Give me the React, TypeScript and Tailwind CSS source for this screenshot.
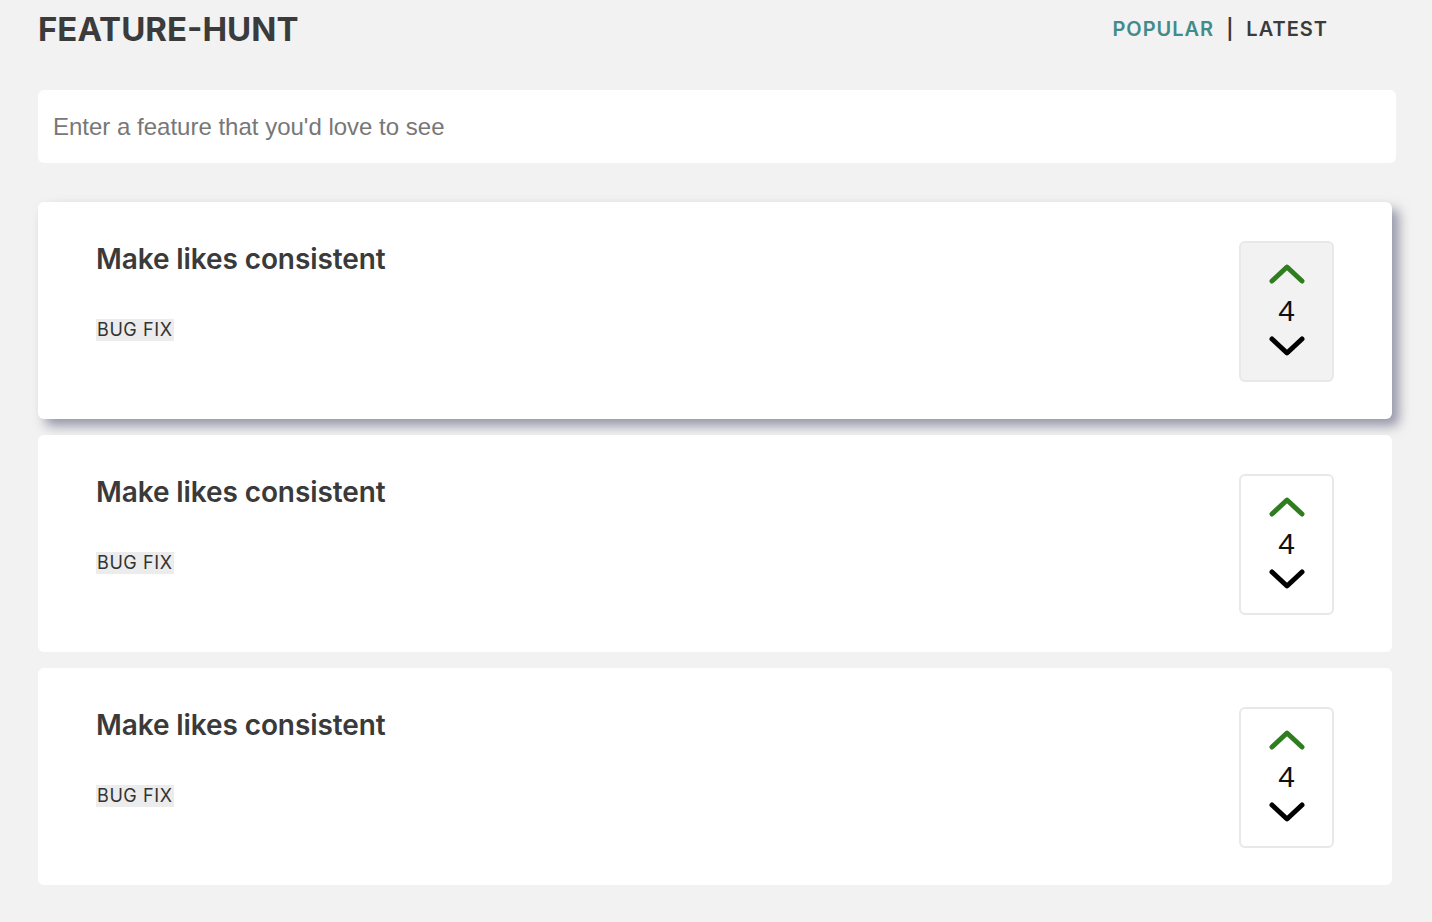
import { useState } from "react";

type Feature = { id: number; title: string; tag: string; votes: number };

const features: Feature[] = [
  { id: 1, title: "Make likes consistent", tag: "BUG FIX", votes: 4 },
  { id: 2, title: "Make likes consistent", tag: "BUG FIX", votes: 4 },
  { id: 3, title: "Make likes consistent", tag: "BUG FIX", votes: 4 },
];

const Chevron = ({ up, color }: { up?: boolean; color: string }) => (
  <svg width="38" height="24" viewBox="0 0 38 24" fill="none" className="block">
    <polyline
      points={up ? "4,19 19,5 34,19" : "4,5 19,19 34,5"}
      stroke={color}
      strokeWidth="5"
      strokeLinecap="round"
      strokeLinejoin="round"
    />
  </svg>
);

const FeatureCard = ({ feature, active }: { feature: Feature; active: boolean }) => (
  <div
    className={`flex justify-between bg-white rounded-[6px] h-[217px] pl-[58px] pr-[58px] pt-[39px] ${
      active ? "shadow-[7px_7px_12px_rgba(90,90,120,0.6)]" : ""
    }`}
  >
    <div className="pt-[1px]">
      <h3 className="font-['Inter',sans-serif] text-[28px] font-semibold text-[#3a3a3a] leading-[34px] tracking-[-0.1px]">
        {feature.title}
      </h3>
      <span className="inline-block mt-[43px] bg-[#ececec] px-[1px] font-['Inter',sans-serif] text-[18px] leading-[22px] tracking-[0.6px] text-[#333]">
        {feature.tag}
      </span>
    </div>
    <div
      className={`w-[95px] h-[141px] rounded-[6px] border-2 border-[#e8e8e8] flex flex-col items-center pt-[19px] ${
        active ? "bg-[#f2f2f2]" : "bg-white"
      }`}
    >
      <Chevron up color="#2f7d1f" />
      <span className="block mt-[10px] font-['Liberation_Sans',sans-serif] text-[30px] leading-[30px] text-[#111]">
        {feature.votes}
      </span>
      <div className="mt-[8px]">
        <Chevron color="#000" />
      </div>
    </div>
  </div>
);

export default function App() {
  const [tab, setTab] = useState<"popular" | "latest">("popular");

  return (
    <div className="min-h-[922px] bg-[#f2f2f2] pl-[38px] pr-[36px] pb-[36px]">
      <header className="flex items-center justify-between h-[58px] pr-[68px]">
        <h1 className="font-['Inter',sans-serif] text-[33px] font-bold text-[#3b3b3b] tracking-[0px] leading-none">
          FEATURE-HUNT
        </h1>
        <nav className="flex items-center gap-[12px] font-['Inter',sans-serif] text-[20px] font-semibold tracking-[1px]">
          <button
            onClick={() => setTab("popular")}
            className={tab === "popular" ? "text-[#438a8a]" : "text-[#3b3b3b]"}
          >
            POPULAR
          </button>
          <span className="text-[#3b3b3b]">|</span>
          <button
            onClick={() => setTab("latest")}
            className={tab === "latest" ? "text-[#438a8a]" : "text-[#3b3b3b]"}
          >
            LATEST
          </button>
        </nav>
      </header>

      <input
        type="text"
        placeholder="Enter a feature that you'd love to see"
        className="mt-[32px] block w-full h-[73px] rounded-[6px] bg-white px-[15px] font-['Liberation_Sans',sans-serif] text-[24px] text-[#333] placeholder:text-[#777] outline-none"
      />

      <div className="mt-[39px] flex flex-col gap-[16px] w-[1354px]">
        {features.map((f, i) => (
          <FeatureCard key={f.id} feature={f} active={i === 0} />
        ))}
      </div>
    </div>
  );
}
